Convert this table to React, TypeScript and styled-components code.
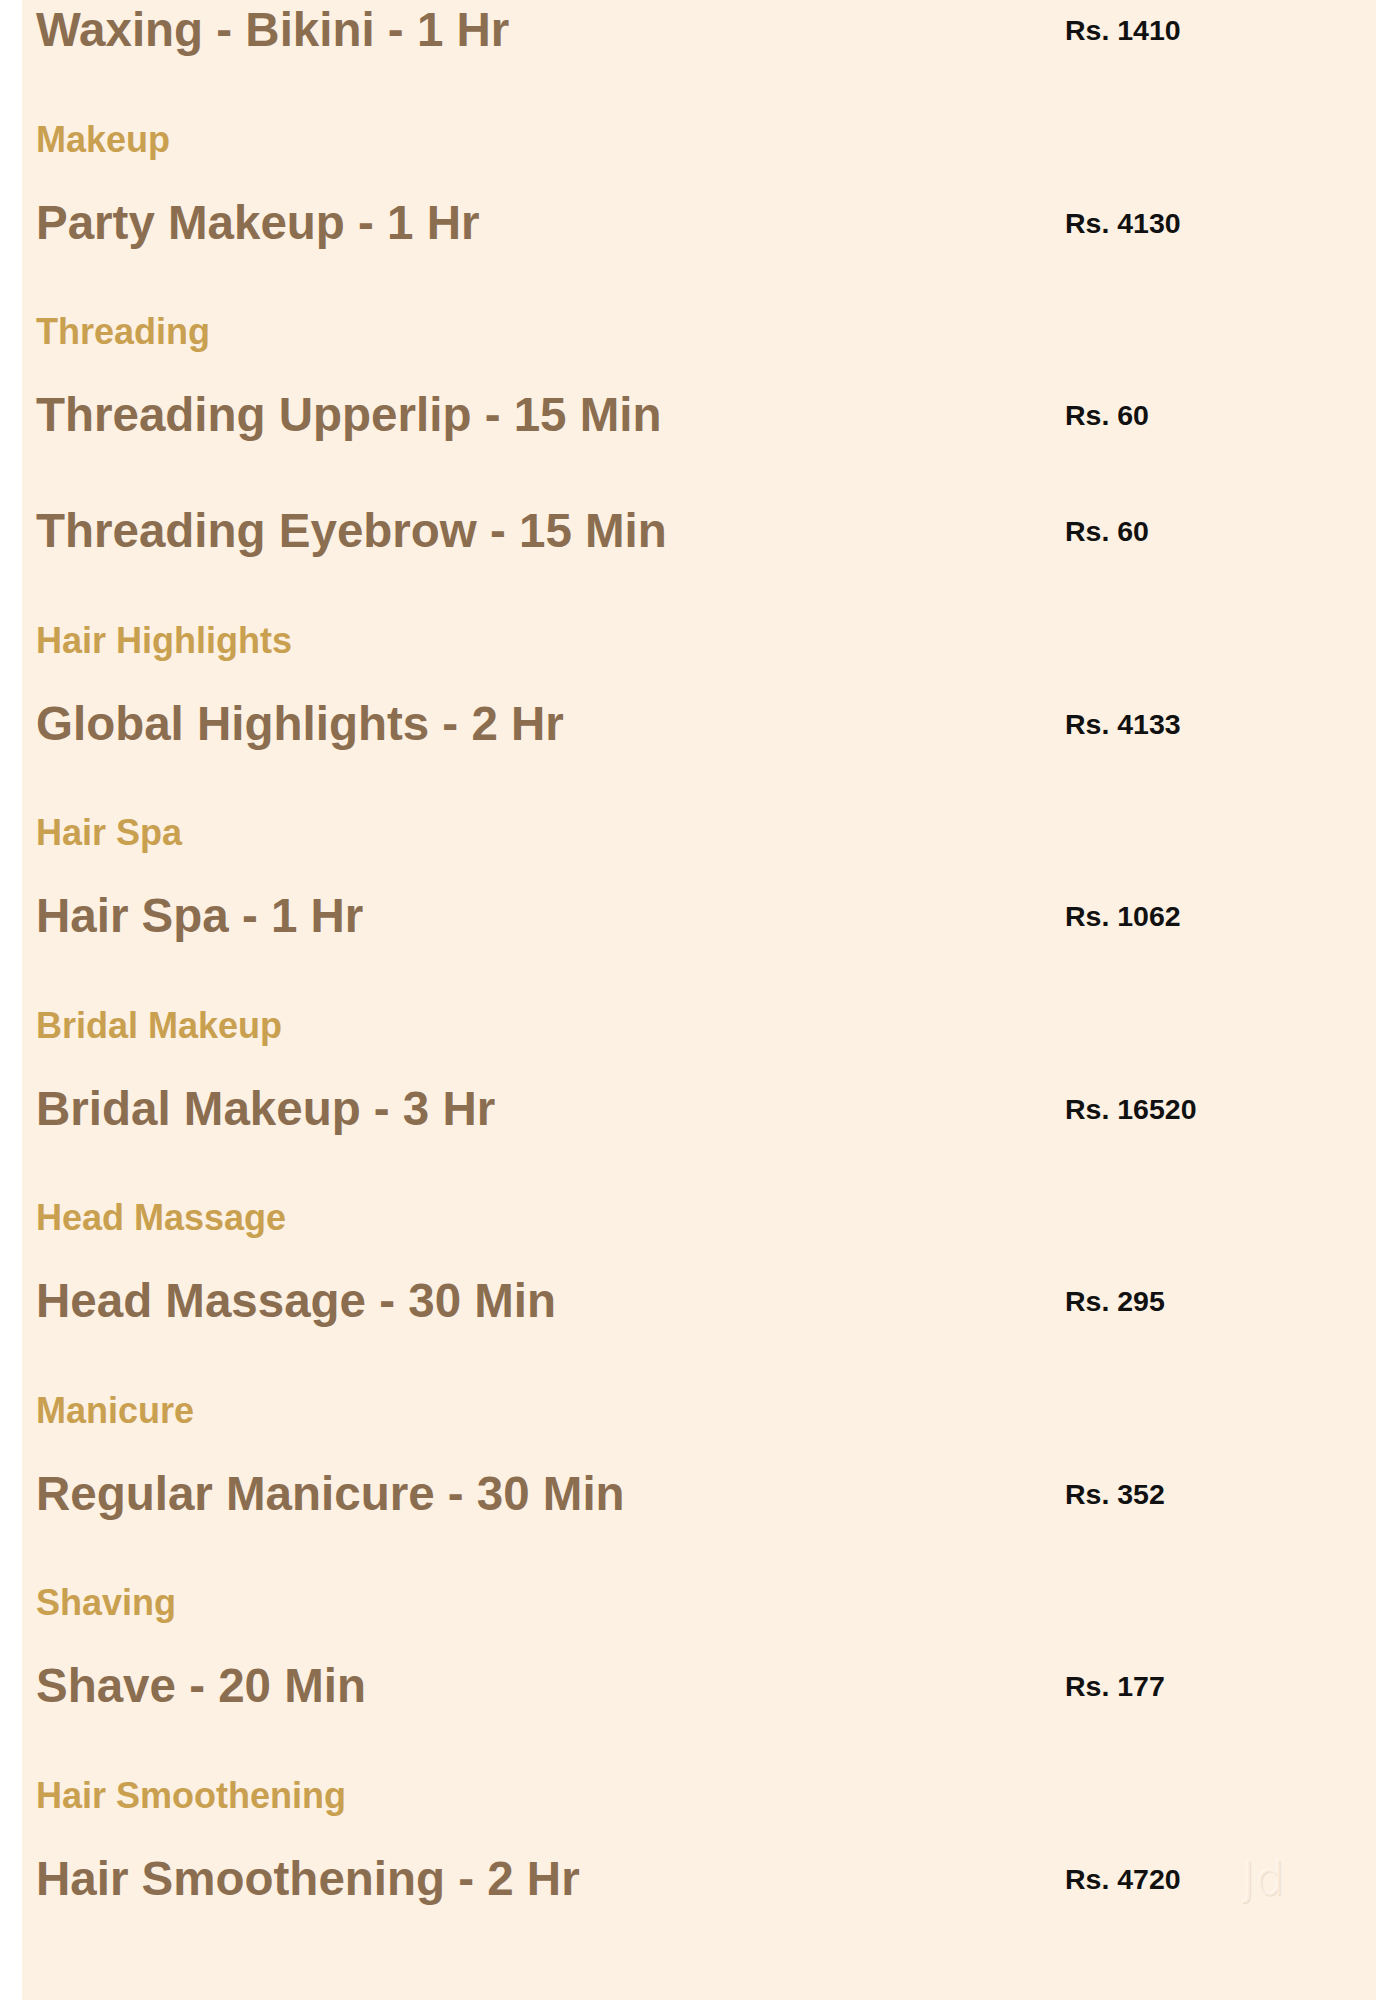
import styled, { createGlobalStyle } from 'styled-components';

type Service = { name: string; price: string };
type Section = { heading?: string; items: Service[] };

const sections: Section[] = [
    { items: [{ name: 'Waxing - Bikini - 1 Hr', price: 'Rs. 1410' }] },
    { heading: 'Makeup', items: [{ name: 'Party Makeup - 1 Hr', price: 'Rs. 4130' }] },
    {
        heading: 'Threading',
        items: [
            { name: 'Threading Upperlip - 15 Min', price: 'Rs. 60' },
            { name: 'Threading Eyebrow - 15 Min', price: 'Rs. 60' },
        ],
    },
    { heading: 'Hair Highlights', items: [{ name: 'Global Highlights - 2 Hr', price: 'Rs. 4133' }] },
    { heading: 'Hair Spa', items: [{ name: 'Hair Spa - 1 Hr', price: 'Rs. 1062' }] },
    { heading: 'Bridal Makeup', items: [{ name: 'Bridal Makeup - 3 Hr', price: 'Rs. 16520' }] },
    { heading: 'Head Massage', items: [{ name: 'Head Massage - 30 Min', price: 'Rs. 295' }] },
    { heading: 'Manicure', items: [{ name: 'Regular Manicure - 30 Min', price: 'Rs. 352' }] },
    { heading: 'Shaving', items: [{ name: 'Shave - 20 Min', price: 'Rs. 177' }] },
    {
        heading: 'Hair Smoothening',
        items: [{ name: 'Hair Smoothening - 2 Hr', price: 'Rs. 4720' }],
    },
];

export default function App() {
    const lastSection = sections.length - 1;

    return (
        <>
            <GlobalStyle />
            <Page>
                <Panel>
                    <List>
                        {sections.map((section, si) => (
                            <SectionBlock key={si}>
                                {section.heading && <Heading>{section.heading}</Heading>}
                                {section.items.map((item, ii) => (
                                    <Row key={ii}>
                                        <Name>{item.name}</Name>
                                        <Price>{item.price}</Price>
                                        {si === lastSection && ii === section.items.length - 1 && (
                                            <Watermark>Jd</Watermark>
                                        )}
                                    </Row>
                                ))}
                            </SectionBlock>
                        ))}
                    </List>
                </Panel>
            </Page>
        </>
    );
}

const GlobalStyle = createGlobalStyle`
    html, body {
        margin: 0;
        padding: 0;
        background: #ffffff;
    }
`;

const Page = styled.div`
    width: 1400px;
    height: 2000px;
    padding: 0 24px 0 22px;
    box-sizing: border-box;
    overflow: hidden;
`;

const Panel = styled.div`
    height: 100%;
    background: #fdf1e3;
    padding-left: 14px;
    overflow: hidden;
    font-family: 'Liberation Sans', Arial, sans-serif;
    font-weight: 700;
`;

const List = styled.div`
    display: flex;
    flex-direction: column;
    margin-top: -28px;
`;

const SectionBlock = styled.section`
    display: flex;
    flex-direction: column;

    & + & {
        margin-top: 26.5px;
    }
`;

const Heading = styled.div`
    height: 50px;
    line-height: 50px;
    font-size: 36px;
    color: #c9a04f;
    white-space: nowrap;
`;

const Row = styled.div`
    position: relative;
    display: grid;
    grid-template-columns: 1029px 1fr;
    height: 116px;
    line-height: 116px;
`;

const Name = styled.div`
    font-size: 47.5px;
    color: #8b6d50;
    white-space: nowrap;
`;

const Price = styled.div`
    font-size: 28.5px;
    color: #111111;
    white-space: nowrap;
`;

const Watermark = styled.span`
    position: absolute;
    left: 1206px;
    top: 0;
    line-height: 116px;
    font-family: 'DejaVu Sans', sans-serif;
    font-weight: 300;
    font-size: 46px;
    color: #fbeee0;
    text-shadow: 1px 1px 0 #eadccb, -1px -1px 0 #fffaf3;
`;
